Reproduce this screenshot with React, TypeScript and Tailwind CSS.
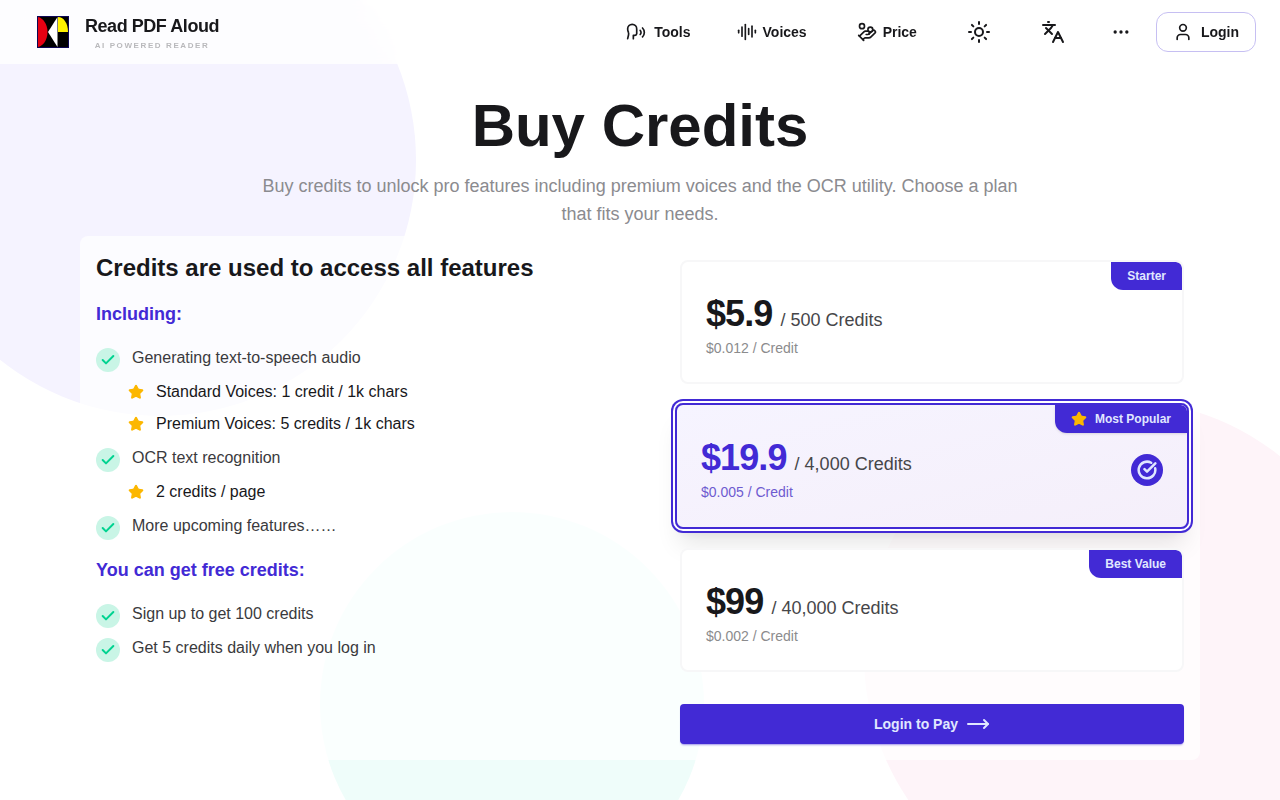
import { useState } from "react"
import {
  AudioLines,
  Check,
  CircleCheckBig,
  Ellipsis,
  HandCoins,
  Languages,
  MoveRight,
  Speech,
  Star,
  Sun,
  User,
} from "lucide-react"
import clsx from "clsx"

const features = [
  {
    text: "Generating text-to-speech audio",
    details: ["Standard Voices: 1 credit / 1k chars", "Premium Voices: 5 credits / 1k chars"],
  },
  { text: "OCR text recognition", details: ["2 credits / page"] },
  { text: "More upcoming features……", details: [] },
]

const freeCredits = ["Sign up to get 100 credits", "Get 5 credits daily when you log in"]

const plans = [
  { id: "starter", badge: "Starter", price: "$5.9", credits: "500", unit: "$0.012" },
  { id: "popular", badge: "Most Popular", price: "$19.9", credits: "4,000", unit: "$0.005" },
  { id: "best", badge: "Best Value", price: "$99", credits: "40,000", unit: "$0.002" },
]

function Logo() {
  return (
    <svg viewBox="0 0 32 32" className="size-8" aria-hidden="true">
      <rect width="32" height="32" fill="#0d0654" />
      <rect x="1" y="1" width="30" height="30" fill="#000" />
      <path d="M1 1c5 1 9.500 7 9.500 15S6 30 1 31z" fill="#e60012" />
      <path d="M20.500 1v30L11 16z" fill="#fff" />
      <path d="M21 1c5.500 0 10 6 10 15H21z" fill="#fff100" />
    </svg>
  )
}

function Header() {
  return (
    <header className="relative flex h-16 items-center justify-between bg-white/80 pl-[37px] pr-6 backdrop-blur-md">
      <a href="#" className="flex items-center gap-4">
        <Logo />
        <span className="flex flex-col items-center">
          <span className="text-lg leading-7 font-bold tracking-tight">Read PDF Aloud</span>
          <span className="text-[8px] leading-3 font-bold tracking-[0.2em] text-[#b9b9bc]">AI POWERED READER</span>
        </span>
      </a>
      <nav className="flex items-center text-sm font-bold">
        <div className="flex items-center gap-[50px]">
          <div className="flex items-center gap-[46px]">
            <a href="#tools" className="flex items-center gap-2">
              <Speech className="size-5" />
              Tools
            </a>
            <a href="#voices" className="flex items-center gap-1.5">
              <AudioLines className="size-5" />
              Voices
            </a>
          </div>
          <a href="#price" className="flex items-center gap-1.5">
            <HandCoins className="size-5" />
            Price
          </a>
          <button type="button" aria-label="Theme">
            <Sun className="size-6" />
          </button>
          <button type="button" aria-label="Language">
            <Languages className="size-6" />
          </button>
        </div>
        <button type="button" aria-label="More" className="ml-[46px]">
          <Ellipsis className="size-5" />
        </button>
        <button
          type="button"
          className="ml-[25px] flex h-10 items-center gap-2 rounded-xl border border-[#c6bff2] px-4"
        >
          <User className="size-5" />
          Login
        </button>
      </nav>
    </header>
  )
}

function CheckItem({ text }: { text: string }) {
  return (
    <div className="flex items-start gap-3 text-[#3a3a3d]">
      <span className="mt-0.5 flex size-6 items-center justify-center rounded-full bg-[#c9f5e6]">
        <Check className="size-4 text-[#00d390]" strokeWidth={3} />
      </span>
      <span className="leading-6">{text}</span>
    </div>
  )
}

function Features() {
  return (
    <div className="p-4">
      <h2 className="text-2xl font-bold">Credits are used to access all features</h2>
      <h3 className="mt-4 text-lg leading-7 font-bold text-[#422ad5]">Including:</h3>
      <ul className="mt-[18px] flex flex-col gap-[10px]">
        {features.map((feature) => (
          <li key={feature.text}>
            <CheckItem text={feature.text} />
            {feature.details.length > 0 && (
              <ul className="mt-2 ml-8 flex flex-col gap-2">
                {feature.details.map((detail) => (
                  <li key={detail} className="flex items-center gap-3 leading-6">
                    <Star className="size-4 fill-[#fcb700] text-[#fcb700]" />
                    {detail}
                  </li>
                ))}
              </ul>
            )}
          </li>
        ))}
      </ul>
      <h3 className="mt-4 text-lg leading-7 font-bold text-[#422ad5]">You can get free credits:</h3>
      <ul className="mt-[18px] flex flex-col gap-2">
        {freeCredits.map((text) => (
          <li key={text}>
            <CheckItem text={text} />
          </li>
        ))}
      </ul>
    </div>
  )
}

function Plans() {
  const [selected, setSelected] = useState("popular")

  return (
    <div className="px-4 pt-6 pb-4">
      <div className="flex flex-col gap-5">
        {plans.map((plan) => {
          const active = plan.id === selected
          return (
            <label
              key={plan.id}
              className={clsx(
                "relative block cursor-pointer overflow-hidden rounded-lg border-2",
                active
                  ? "-mx-[5px] -my-px border-[#422ad5] bg-linear-to-br from-[#f6f4ff] to-[#f5effa] px-6 pt-[33px] pb-[25px] shadow-xl ring-2 ring-[#422ad5] ring-offset-2"
                  : "border-[#f7f7f8] bg-white px-6 pt-8 pb-6"
              )}
            >
              <input
                type="radio"
                name="plan"
                value={plan.id}
                checked={active}
                onChange={() => setSelected(plan.id)}
                className="sr-only"
              />
              <span
                className={clsx(
                  "absolute top-0 right-0 flex h-7 items-center gap-2 rounded-tr-md rounded-bl-xl bg-[#422ad5] px-4 text-xs font-bold text-[#e0e7ff]",
                  active && "shadow-sm"
                )}
              >
                {plan.id === "popular" && <Star className="size-4 fill-[#fcb700] text-[#fcb700]" />}
                {plan.badge}
              </span>
              <span className="flex items-center justify-between">
                <span className="block">
                  <span className="flex items-baseline gap-2 leading-10">
                    <span className={clsx("text-4xl font-bold tracking-tight", active && "text-[#422ad5]")}>
                      {plan.price}
                    </span>
                    <span className="text-lg leading-7 text-[#464649]">/ {plan.credits} Credits</span>
                  </span>
                  <span
                    className={clsx("mt-1 block text-sm leading-5", active ? "text-[#6e5bd0]" : "text-[#8b8b8d]")}
                  >
                    {plan.unit} / Credit
                  </span>
                </span>
                {active && (
                  <span className="flex size-8 items-center justify-center rounded-full bg-[#422ad5] text-[#e0e7ff]">
                    <CircleCheckBig className="size-5" strokeWidth={3} />
                  </span>
                )}
              </span>
            </label>
          )
        })}
      </div>
      <button
        type="button"
        className="mt-8 flex h-10 w-full items-center justify-center gap-2 rounded-sm bg-[#422ad5] text-sm font-bold text-[#e0e7ff] shadow-[0_2px_2px_-1px_#422ad580]"
      >
        Login to Pay
        <MoveRight className="size-6" />
      </button>
    </div>
  )
}

export default function App() {
  return (
    <div className="relative min-h-screen overflow-hidden bg-white font-['Liberation_Sans',Arial,sans-serif] text-[#18181b]">
      <div className="absolute -top-24 -left-24 size-128 rounded-full bg-[#f5f3ff]" />
      <div className="absolute top-1/2 -right-24 size-128 rounded-full bg-[#fef4f9]" />
      <div className="absolute -bottom-24 left-1/4 size-96 rounded-full bg-[#effdfa]" />

      <Header />

      <main className="relative px-20 pt-8 pb-10">
        <div className="mx-auto max-w-3xl text-center">
          <h1 className="text-6xl font-bold">Buy Credits</h1>
          <p className="mt-4 text-lg leading-7 text-[#8b8b8f]">
            Buy credits to unlock pro features including premium voices and the OCR utility. Choose a plan that fits
            your needs.
          </p>
        </div>
        <section className="mx-auto mt-2 grid max-w-6xl rounded-lg bg-white/70 md:grid-cols-[584fr_536fr]">
          <Features />
          <Plans />
        </section>
      </main>
    </div>
  )
}
